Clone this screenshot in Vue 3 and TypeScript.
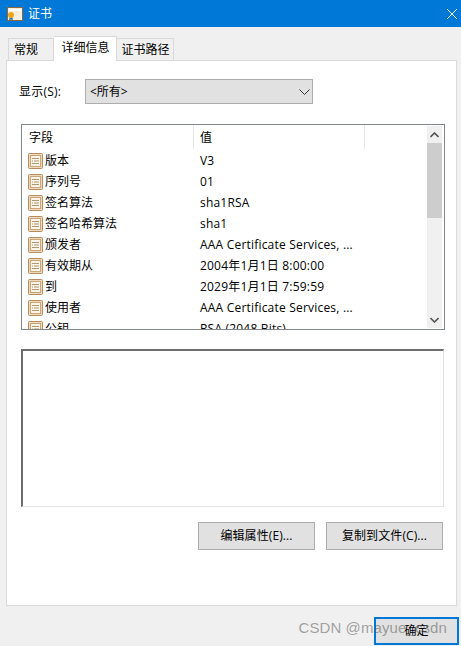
<script setup lang="ts">
const rows: [string, string][] = [
  ['版本', 'V3'],
  ['序列号', '01'],
  ['签名算法', 'sha1RSA'],
  ['签名哈希算法', 'sha1'],
  ['颁发者', 'AAA Certificate Services, ...'],
  ['有效期从', '2004年1月1日 8:00:00'],
  ['到', '2029年1月1日 7:59:59'],
  ['使用者', 'AAA Certificate Services, ...'],
  ['公钥', 'RSA (2048 Bits)'],
]
</script>

<template>
  <div class="window">
    <header class="titlebar">
      <svg class="cert" width="16" height="14" viewBox="0 0 16 14">
        <rect x="0.5" y="0.5" width="15" height="13" fill="#f6efdf" stroke="#8a6a3a" />
        <rect x="2" y="2" width="12" height="2" fill="#fff" />
        <path d="M3 9l-1 4.500 2-1 2 1-1-4.500z" fill="#2f6db5" />
        <circle cx="4" cy="8" r="3" fill="#eda51c" />
      </svg>
      <span class="title">证书</span>
      <svg class="close" width="10" height="10" viewBox="0 0 10 10">
        <path d="M0 0L10 10M10 0L0 10" stroke="#fff" stroke-width="1" fill="none" />
      </svg>
    </header>

    <div class="content">
      <nav class="tabs">
        <span class="tab t1">常规</span>
        <span class="tab active">详细信息</span>
        <span class="tab t3">证书路径</span>
      </nav>

      <section class="panel">
        <div class="show-row">
          <label class="show-label">显示(S):</label>
          <div class="combo">
            <span>&lt;所有&gt;</span>
            <svg width="11" height="6" viewBox="0 0 11 6">
              <path d="M0.500 0.500L5.500 5.500L10.500 0.500" stroke="#333" fill="none" />
            </svg>
          </div>
        </div>

        <div class="listbox">
          <div class="list-main">
            <div class="list-head">
              <span class="col-a head-cell">字段</span>
              <span class="col-b head-cell">值</span>
            </div>
            <div v-for="r in rows" :key="r[0]" class="row">
              <span class="col-a field">
                <svg class="ficon" width="15" height="16" viewBox="0 0 15 16">
                  <rect x="0.500" y="0.500" width="14" height="15" rx="1" fill="#f0d8b8" stroke="#b58d60" />
                  <rect x="2.500" y="2.500" width="10" height="11" fill="#fbf4e8" stroke="#cba67a" />
                  <path d="M4 5.500h7M4 8h1M6 8h5M4 10.500h7" stroke="#b09673" />
                </svg>
                {{ r[0] }}
              </span>
              <span class="col-b val">{{ r[1] }}</span>
            </div>
          </div>
          <div class="scrollbar">
            <svg class="arrow" width="9" height="6" viewBox="0 0 9 6">
              <path d="M0.500 5L4.500 1L8.500 5" stroke="#555" stroke-width="1.600" fill="none" />
            </svg>
            <div class="thumb-track"><div class="thumb"></div></div>
            <svg class="arrow" width="9" height="6" viewBox="0 0 9 6">
              <path d="M0.500 1L4.500 5L8.500 1" stroke="#555" stroke-width="1.600" fill="none" />
            </svg>
          </div>
        </div>

        <div class="detail"></div>

        <div class="actions">
          <button class="btn wide">编辑属性(E)...</button>
          <button class="btn wide">复制到文件(C)...</button>
        </div>
      </section>

      <div class="footer">
        <button class="btn ok">确定</button>
        <span class="watermark">CSDN @mayue_csdn</span>
      </div>
    </div>
  </div>
</template>

<style>
html, body { margin: 0; background: #f0f0f0; }
</style>

<style scoped>
.window {
  width: 461px;
  height: 646px;
  overflow: hidden;
  background: #f0f0f0;
  color: #000;
  font: 12px/16px "Open Sans", "Noto Sans CJK SC", sans-serif;
  box-sizing: border-box;
}
.titlebar {
  height: 27px;
  background: #0078d7;
  color: #fff;
  display: flex;
  align-items: center;
  padding: 0 4px 0 7px;
}
.cert { flex: none; margin-right: 5px; }
.title { flex: 1; }
.close { flex: none; }
.content { padding: 9px 4px 0 6px; }
.tabs { display: flex; align-items: flex-end; height: 25px; padding-left: 2px; margin-bottom: -1px; position: relative; z-index: 1; }
.tab {
  box-sizing: border-box;
  height: 22px;
  line-height: 21px;
  background: #f0f0f0;
  border: 1px solid #d9d9d9;
  border-bottom: 0;
  text-align: center;
  margin-bottom: 1px;
}
.t1 { width: 46px; text-align: left; padding-left: 5px; }
.t3 { width: 57px; border-left: 0; padding-left: 1px; }
.tab.active {
  width: 63px;
  height: 25px;
  line-height: 22px;
  background: #fff;
  margin-bottom: 0;
  border-left: 0;
  padding-left: 1px;
}
.panel {
  box-sizing: border-box;
  width: 451px;
  height: 546px;
  background: #fff;
  border: 1px solid #d9d9d9;
  padding: 18px 0 0 14px;
}
.show-row { display: flex; align-items: center; height: 25px; }
.show-label { width: 66px; margin-left: -2px; letter-spacing: 0.2px; }
.combo {
  box-sizing: border-box;
  width: 228px;
  height: 25px;
  background: #e1e1e1;
  border: 1px solid #adadad;
  display: flex;
  align-items: center;
  justify-content: space-between;
  padding: 0 2px 0 4px;
}
.listbox {
  box-sizing: border-box;
  width: 424px;
  height: 206px;
  margin-top: 20px;
  border: 1px solid #82878c;
  display: flex;
  overflow: hidden;
}
.list-main { flex: 1; min-width: 0; overflow: hidden; }
.list-head { display: flex; height: 25px; }
.head-cell {
  height: 24px;
  line-height: 26px;
  border-right: 1px solid #e5e5e5;
  box-sizing: border-box;
}
.row { display: flex; height: 21px; line-height: 20px; align-items: center; white-space: nowrap; }
.col-a { width: 172px; padding-left: 7px; box-sizing: border-box; flex: none; }
.col-b { width: 171px; padding-left: 6px; box-sizing: border-box; flex: none; }
.val { letter-spacing: 0.2px; }
.field { display: flex; align-items: center; padding-left: 6px; }
.ficon { flex: none; margin-right: 2px; }
.scrollbar {
  width: 15px;
  flex: none;
  background: #f0f0f0;
  margin: 1px 2px 1px 0;
  display: flex;
  flex-direction: column;
  align-items: center;
  justify-content: space-between;
  box-sizing: border-box;
}
.arrow { margin: 6px 0 5px; flex: none; }
.thumb-track { flex: 1; width: 100%; }
.thumb { height: 75px; background: #cdcdcd; }
.detail {
  box-sizing: border-box;
  width: 423px;
  height: 158px;
  margin-top: 19px;
  background: #fff;
  border: 1px solid #e3e3e3;
  border-top: 2px solid #6d6d6d;
  border-left: 2px solid #6d6d6d;
}
.actions { display: flex; justify-content: flex-end; gap: 11px; margin: 15px 13px 0 0; }
.btn {
  box-sizing: border-box;
  background: #e1e1e1;
  border: 1px solid #adadad;
  font: inherit;
  color: #000;
  padding: 0;
  letter-spacing: 0.1px;
}
.wide { width: 117px; height: 28px; }
.footer { position: relative; display: flex; justify-content: flex-end; padding-top: 11px; }
.ok { width: 85px; height: 28px; border: 2px solid #0078d7; margin-right: -2px; }
.watermark {
  position: absolute;
  right: 10px;
  top: 12px;
  font: 15px/20px "Liberation Sans", sans-serif;
  letter-spacing: 0.1px;
  color: rgba(90, 90, 90, 0.55);
  white-space: nowrap;
  pointer-events: none;
}
</style>
